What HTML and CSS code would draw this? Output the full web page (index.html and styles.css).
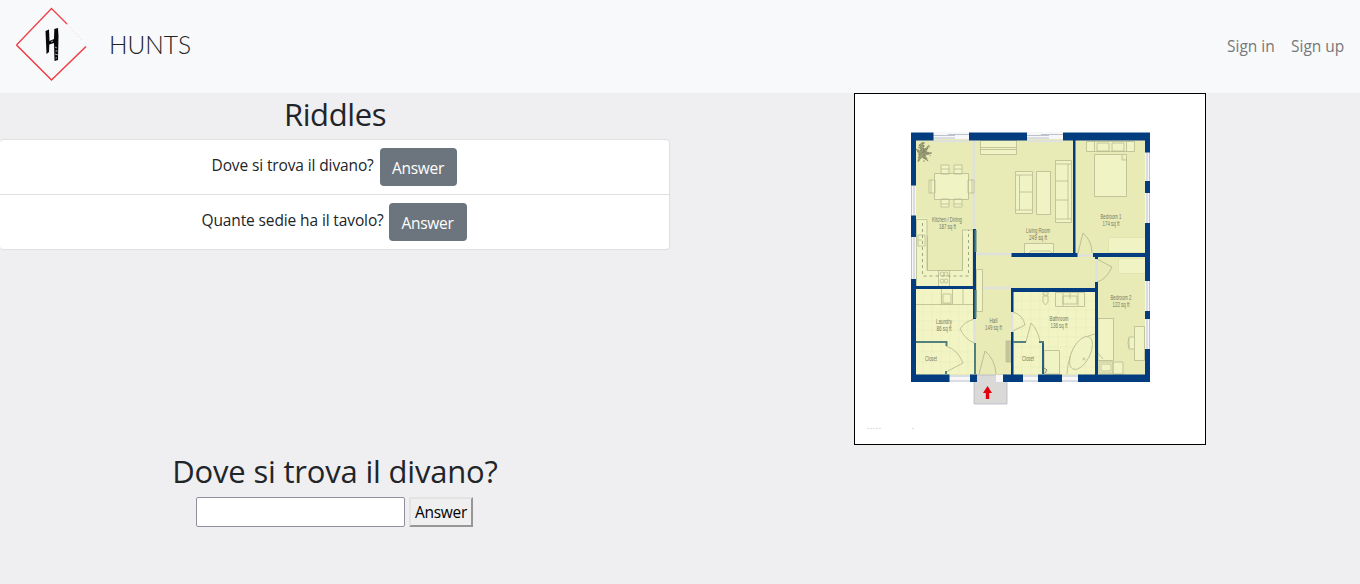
FILE: index.html
```html
<!DOCTYPE html>
<html lang="it">
<head>
<meta charset="utf-8">
<title>Hunts</title>
<link rel="stylesheet" href="styles.css">
</head>
<body>
<header class="navbar">
  <a class="brand" href="#">
    <svg width="200" height="93" viewBox="0 0 200 93">
      <g fill="none" stroke="#ef4048" stroke-width="1.3">
        <path d="M67 24 51.5 8.5 16.5 45"/>
        <path d="M16.500 45 51.500 80 86 46.500" stroke-width="1.6"/>
        <path d="M67 24 83 41" stroke="#f4c9cd" stroke-width=".7" stroke-dasharray="2 2"/>
      </g>
      <path d="M45.500 31 49 29.500 49.500 41 54 39 54.300 29 58 28 58.500 36 58 60 54.500 61 54 43 49.300 44.500 49 52 46.500 54Z" fill="#080808"/>
      <path d="M55 47l2 1M55.500 51h2M55 54l3 1M55.500 58h1.500M51 42l2-1" stroke="#eee" stroke-width=".7"/>
      <text class="wordmark" x="109" y="54" textLength="82" lengthAdjust="spacingAndGlyphs">HUNTS</text>
    </svg>
  </a>
  <nav class="links"><a class="link-in" href="#">Sign in</a><a class="link-up" href="#">Sign up</a></nav>
</header>
<main class="layout">
  <section class="riddles">
    <h2 class="title"><span class="title-riddles">Riddles</span></h2>
    <ul class="list">
      <li class="item"><span class="question q-divano">Dove si trova il divano?</span><button class="btn">Answer</button></li>
      <li class="item"><span class="question q-sedie">Quante sedie ha il tavolo?</span><button class="btn btn-wide">Answer</button></li>
    </ul>
  </section>
  <figure class="map">
    <svg class="plan" width="350" height="350" viewBox="855 94 350 350">
      <path d="M911 133H1150V382H911Z" fill="#e8ebb6"/>
      <path d="M916 289H974V374H916ZM1013 292H1095V374H1013ZM916 218h11v68h-11Z" fill="#f2f5c3"/>
      <path d="M923 292V374M932 292V374M941 292V374M950 304V374M959 304V374M968 304V374M916 312H974M916 321H974M916 330H974M916 352H974M916 362H974M1022 292V374M1031 292V374M1040 292V374M1049 292V374M1058 292V374M1067 292V374M1076 292V374M1086 292V374M1013 301H1095M1013 310H1095M1013 319H1095M1013 328H1095M1013 337H1095M1013 347H1095M1013 357H1095M1013 367H1095" stroke="#e6eabc" stroke-width=".6"/>
      <!-- interior openings -->
      <path d="M974 140V230M976 254H1011M976 288H1011M933 141H969M1027 141H1063M974.500 319V343M1012 312V332M1077 255.500H1093M1096.500 259V282" stroke="#dfe1db" stroke-width="2.500" fill="none"/>
      <!-- windows -->
      <path d="M911 186h5v30h-5ZM911 237h5v42h-5ZM1145 152h5v29h-5ZM1145 193h5v30h-5ZM1145 281h5v30h-5ZM1145 319h5v30h-5ZM949 375h21v7h-21ZM1023 375h15v7h-15ZM1062 375h16v7h-16ZM933 132h36v7h-36ZM1027 132h36v7h-36Z" fill="#f7f7f9"/>
      <path d="M911.500 186v30M914 186v30M911.500 237v42M914 237v42M1147 152v29M1149.500 152v29M1147 193v30M1149.500 193v30M1147 281v30M1149.500 281v30M1147 319v30M1149.500 319v30M949 376h21M949 381h21M1023 376h15M1023 381h15M1062 376h16M1062 381h16M933 135.500h22M933 138h22M948 134.500h21M1027 135.500h22M1027 138h22M1041 134.500h22" stroke="#adb4c2" stroke-width=".8"/>
      <path d="M974 375h33v29h-33Z" fill="#dad9d8" stroke="#b3b8c3" stroke-width=".8"/>
      <path d="M996 375h7v7h-7Z" fill="#f7f7f9"/>
      <!-- furniture -->
      <g fill="#f0f3c4" stroke="#b7ba91" stroke-width=".8">
        <path d="M941 165h8v9h-8ZM954 165h8v9h-8ZM941 199h8v8h-8ZM954 199h8v8h-8ZM929 180h6v13h-6ZM968 180h6v13h-6ZM934.500 173.500h34v26h-34Z"/>
        <path d="M941 169h8M954 169h8M941 204h8M954 204h8M931 180v13M972 180v13"/>
        <path d="M980.500 140.500h36v14h-36ZM980.500 147.500h36M980.500 149.500h36"/>
        <path d="M1015.500 171.500h17v42h-17ZM1019.500 175v35M1016 175h16M1016 210h16M1019 192h13"/>
        <path d="M1036.500 171.500h14v43h-14ZM1055.500 160.500h16v62h-16ZM1056 164h15M1068 164v55M1056 181h12M1056 200h12M1056 219h15"/>
        <path d="M1024.500 243.500h29v10h-29ZM1029 253l2-2h19l2 2"/>
        <path d="M1086.500 141.500h48v10h-48ZM1094.500 141.500v10M1126.500 141.500v10M1097 143h12v8h-12ZM1112 143h12v8h-12ZM1094.500 154.500h32v42h-32ZM1122 155v5h5"/>
        <path d="M1108.500 237.500h37v15h-37ZM1118.500 258.500h27v15h-27Z" stroke="#dfe1ac"/>
        <path d="M916.500 219.500h10.500v51h35.500v-40.500h10.500v56.500h-56.500Z"/>
        <path d="M927.500 236v34M962.500 236v34M938.500 270.500h11v16h-11Z" fill="none"/>
        <path d="M918 235h7v11h-7ZM918 240h4"/>
        <path d="M922.500 223v53h46v-46" fill="none" stroke="#8e9173" stroke-dasharray="3 3"/>
        <g fill="none"><circle cx="942" cy="274" r="2"/><circle cx="946" cy="274" r="2"/><circle cx="942" cy="281" r="2"/><circle cx="946" cy="281" r="2"/></g>
        <path d="M916 304.500h57M941.500 289v15h11v-15M943 294h8v9h-8ZM963 289v15" fill="none"/>
        <path d="M976.500 269.500h6v42h-6Z"/>
        <path d="M1055.500 292.500h29v14h-29ZM1063 293v13M1078 293v13M1063 296h14v8h-14ZM1070 293v6M1043 292h5v3h-5ZM1043 296v6q2.500 5 5 0v-6Z"/>
        <path d="M1044 350.500h15.500V374H1044Z"/><path d="M1067 374q2-35 28-40" fill="none"/>
        <ellipse cx="1081" cy="353" rx="9" ry="18" transform="rotate(27 1081 353)"/><circle cx="1084" cy="359" r="1"/>
        <path d="M1098 318.500h15.500v42H1098ZM1098 353l5 6M1099 362h14v11h-14ZM1101 364h10v7h-10ZM1113 362h10v12h-10ZM1134.500 326.500h10v34h-10ZM1134 337h-5q-2 6 0 12h5M1129 338v10"/>
        <path d="M1006 341h5v21h-5ZM1008 341v21" fill="#c8cba5"/>
      </g>
      <!-- door swings -->
      <path d="M974 319q-10 3-14 10 5 10 14 14M946 346q12 4 17 17l-17 9M979 374l6-23q10 8 11 23M1013 312q10 3 12 13l-12 6M1026 342l5-19q7 7 9 19M1078 253l5-20q9 8 9 20M1097 259l15 8q-5 12-15 15" fill="none" stroke="#b1b48b" stroke-width=".8"/>
      <!-- walls -->
      <path d="M911 132.500h22.500v8H916v45h-5ZM969 132.500h58v8h-58ZM1063 132.500h87v20h-5v-12h-82ZM911 215.500h5V237h-5ZM911 279h5v7h57v-57h3v90h-3v-30h-57v85.500h33.500v7.500H911ZM1145 181h5v12h-5ZM1145 223h5v58h-5v-24h-52v-4h52ZM1145 311h5v8h-5ZM1145 349h5v33h-72v-7.500h67ZM970 374.500h7v7.500h-7ZM1003 374.500h20v7.500h-20ZM1038 374.500h24v7.500h-24ZM1073 140h2.500v113h2v4H1011.500v-4H1073ZM1011 288h84v-6h3v93h-3v-83h-81.500v20H1011ZM1011 332h2.500v43h-2.500ZM1095 257h3v2h-3Z" fill="#043c80"/>
      <path d="M975.500 230V252M975.500 290V318M975 343V374M916 342H946.500V346M946 371V374M1013 342H1026M1039 342H1043V374" fill="none" stroke="#52807b" stroke-width="2"/>
      <path d="M1043 343V374" stroke="#043c80" stroke-width="1"/>
      <path d="m923 142 1 8 5-5-3 7 6 1-7 2 3 6-6-4-4 5 1-8-3-5 5 2-2-6ZM919 155l12-9M918 147l13 9M924 142v20" fill="#9a9d75" stroke="#777a59" stroke-width=".7" stroke-dasharray="2 1"/>
      <path d="m1044 368 3 2-2 3" fill="none" stroke="#898c70"/>
      <path d="m987.500 386 4.500 7h-2.800v6h-3.400v-6H983Z" fill="#e3000b"/>
      <g class="room">
        <text x="947" y="222" textLength="30" lengthAdjust="spacingAndGlyphs">Kitchen / Dining</text><text x="947.500" y="229" textLength="17" lengthAdjust="spacingAndGlyphs">187 sq ft</text>
        <text x="1038" y="232.500" textLength="24" lengthAdjust="spacingAndGlyphs">Living Room</text><text x="1038" y="239.500" textLength="18" lengthAdjust="spacingAndGlyphs">249 sq ft</text>
        <text x="1111" y="219" textLength="21" lengthAdjust="spacingAndGlyphs">Bedroom 1</text><text x="1111" y="226" textLength="17" lengthAdjust="spacingAndGlyphs">174 sq ft</text>
        <text x="944" y="323.500" textLength="16" lengthAdjust="spacingAndGlyphs">Laundry</text><text x="944" y="330.500" textLength="15" lengthAdjust="spacingAndGlyphs">86 sq ft</text>
        <text x="993.500" y="323" textLength="8" lengthAdjust="spacingAndGlyphs">Hall</text><text x="993.500" y="330" textLength="17" lengthAdjust="spacingAndGlyphs">149 sq ft</text>
        <text x="1059" y="321" textLength="19" lengthAdjust="spacingAndGlyphs">Bathroom</text><text x="1059" y="328" textLength="17" lengthAdjust="spacingAndGlyphs">136 sq ft</text>
        <text x="1121" y="300" textLength="21" lengthAdjust="spacingAndGlyphs">Bedroom 2</text><text x="1121" y="307" textLength="17" lengthAdjust="spacingAndGlyphs">122 sq ft</text>
        <text x="931" y="361" textLength="12" lengthAdjust="spacingAndGlyphs">Closet</text><text x="1028" y="361" textLength="12" lengthAdjust="spacingAndGlyphs">Closet</text>
      </g>
      <path d="M867 428.500h14M912 428.500h3" stroke="#dedede" stroke-dasharray="2 1"/>
    </svg>
  </figure>
  <section class="answer">
    <h2 class="title"><span class="title-question">Dove si trova il divano?</span></h2>
    <form class="form"><input class="field" type="text"><button class="submit" type="button">Answer</button></form>
  </section>
</main>
</body>
</html>
```
FILE: styles.css
```css
* { box-sizing: border-box; }
body { margin: 0; min-height: 584px; background: #efeff1; color: #212529; font: 400 15.5px/24px "Open Sans", "Noto Sans", sans-serif; }
.navbar { height: 93px; display: flex; justify-content: space-between; align-items: center; background: #f8f9fb; padding-right: 15px; }
.brand, .brand svg, .plan { display: block; }
.wordmark { font: 300 25px Lato, sans-serif; fill: #222; }
.links { display: flex; gap: 16px; padding-bottom: 2px; }
.links a { color: #777879; text-decoration: none; white-space: nowrap; letter-spacing: 0; }
.link-in { width: 48px; }
.link-up { width: 54px; }
.layout { display: grid; grid-template-columns: 670px 660px; column-gap: 30px; grid-template-rows: 352px auto; }
.title { margin: 0; font-size: 31px; font-weight: 400; line-height: 38px; text-align: center; white-space: nowrap; }
.riddles .title { padding-top: 2px; height: 46px; }
.title-riddles { letter-spacing: -.4px; }
.title-question { letter-spacing: -.2px; }
.list { list-style: none; margin: 0; padding: 0; border: 1px solid #dfdfdf; border-left: 0; border-radius: 4px; background: #fff; }
.item { display: flex; justify-content: center; gap: 5px; height: 54px; padding: 8px 1px 0 0; }
.item + .item { gap: 4px; height: 55px; border-top: 1px solid #dfdfdf; }
.question { white-space: nowrap; padding-top: 5px; letter-spacing: -.12px; }
.q-divano { width: 163px; }
.q-sedie { width: 183px; }
.btn { width: 77px; height: 38px; padding: 2px 0 0; border: 0; border-radius: 4px; background: #6c757d; color: #fff; font: inherit; letter-spacing: -.25px; }
.btn-wide { width: 78px; }
.map { margin: 0; justify-self: center; width: 352px; height: 352px; border: 1px solid #000; background: #fff; }
.room { font: 6.5px "Liberation Sans", sans-serif; fill: #77795f; text-anchor: middle; }
.answer { padding-top: 7px; }
.form { display: flex; justify-content: center; gap: 4px; margin-top: 7px; padding-right: 1px; }
.field { width: 209px; height: 30px; border: 1px solid #8f8f9d; border-radius: 2px; background: #fff; }
.submit { width: 64px; height: 30px; padding: 0; border: 2px solid; border-color: #e3e3e3 #979797 #979797 #e3e3e3; background: #efefef; color: #000; font: inherit; letter-spacing: -.3px; }
```
